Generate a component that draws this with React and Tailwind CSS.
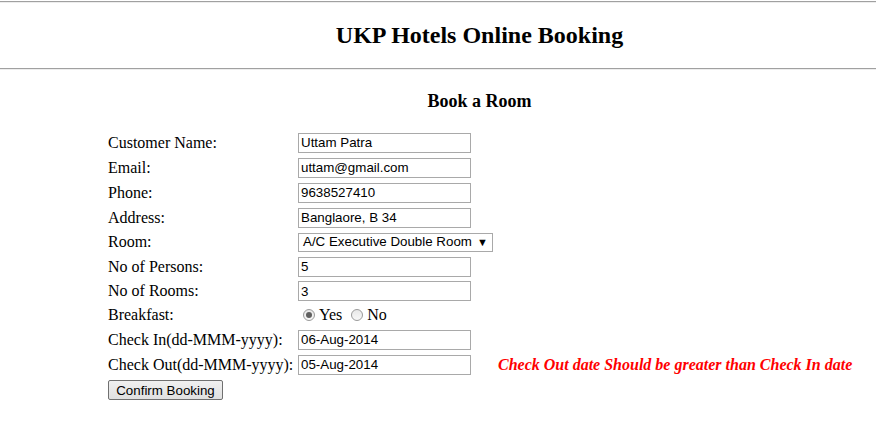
import { useState } from "react";

const fields = [
  { label: "Customer Name:", value: "Uttam Patra" },
  { label: "Email:", value: "uttam@gmail.com" },
  { label: "Phone:", value: "9638527410" },
  { label: "Address:", value: "Banglaore, B 34" },
];

function Field({ value }) {
  return (
    <input
      type="text"
      defaultValue={value}
      className="w-[173px] h-[20px] px-[2px] border border-[#a9a9a9] text-[13.33px] text-black outline-none"
      style={{ fontFamily: '"Liberation Sans", Arial, sans-serif' }}
    />
  );
}

function Row({ label, h = "h-[25px]", children, extra }) {
  return (
    <div className={`flex items-center ${h}`}>
      <div className="w-[190px] text-[16px] text-black">{label}</div>
      <div className="w-[200px] flex items-center">{children}</div>
      {extra}
    </div>
  );
}

// light gray radio like old IE/Chrome on Windows
function Radio({ checked, onClick }) {
  return (
    <span
      onClick={onClick}
      className="ml-[5px] mr-[4px] w-[12px] h-[12px] rounded-full border border-[#9a9a9a] bg-gradient-to-b from-[#e8e8e8] to-[#f8f8f8] flex items-center justify-center cursor-pointer">
      {checked && <span className="w-[6px] h-[6px] rounded-full bg-[#606060]" />}
    </span>
  );
}

export default function App() {
  const [breakfast, setBreakfast] = useState("yes");
  const sans = { fontFamily: '"Liberation Sans", Arial, sans-serif' };

  return (
    <div
      className="w-[876px] h-[422px] bg-white text-black overflow-hidden"
      style={{ fontFamily: '"Liberation Serif", "Times New Roman", serif' }}>
      {/* header */}
      <div className="mt-[1px] border-t border-t-[#a0a0a0] border-b border-b-[#ededed]" />
      <div className="h-[65px] flex items-center pl-[108px]">
        <h1 className="w-[743px] text-center text-[24px] font-bold -mt-[2px]">UKP Hotels Online Booking</h1>
      </div>
      <div className="border-t border-t-[#a0a0a0] border-b border-b-[#ededed]" />

      <div className="pl-[108px]">
        <h2 className="w-[743px] text-center text-[18px] font-bold mt-[19px] h-[25px] leading-[25px]">
          Book a Room
        </h2>

        {/* form */}
        <div className="mt-[16px]">
          {fields.map((f) => (
            <Row key={f.label} label={f.label}>
              <Field value={f.value} />
            </Row>
          ))}

          <Row label="Room:" h="h-[24px]">
            <div
              className="relative w-[195px] h-[19px] border border-[#a9a9a9] flex items-center pl-[4px] text-[13.33px]"
              style={sans}>
              A/C Executive Double Room
              <span className="absolute right-[4px] top-[1px] text-[11px] leading-[15px]">▼</span>
            </div>
          </Row>

          <Row label="No of Persons:">
            <Field value="5" />
          </Row>
          <Row label="No of Rooms:" h="h-[24px]">
            <Field value="3" />
          </Row>

          <Row label="Breakfast:" h="h-[24px]">
            <label className="flex items-center text-[16px]">
              <Radio checked={breakfast === "yes"} onClick={() => setBreakfast("yes")} />
              Yes
            </label>
            <label className="flex items-center text-[16px] ml-[4px]">
              <Radio checked={breakfast === "no"} onClick={() => setBreakfast("no")} />
              No
            </label>
          </Row>

          <Row label="Check In(dd-MMM-yyyy):">
            <Field value="06-Aug-2014" />
          </Row>
          <Row
            label="Check Out(dd-MMM-yyyy):"
            extra={
              <span className="text-[16px] font-bold italic text-[#ff0000]">
                Check Out date Should be greater than Check In date
              </span>
            }>
            <Field value="05-Aug-2014" />
          </Row>

          <div className="mt-[1px]">
            <button
              className="h-[20px] w-[115px] border border-[#707070] rounded-[2px] bg-gradient-to-b from-[#f0f0f0] to-[#e0e0e0] text-[13.33px] text-black"
              style={sans}>
              Confirm Booking
            </button>
          </div>
        </div>
      </div>
    </div>
  );
}
